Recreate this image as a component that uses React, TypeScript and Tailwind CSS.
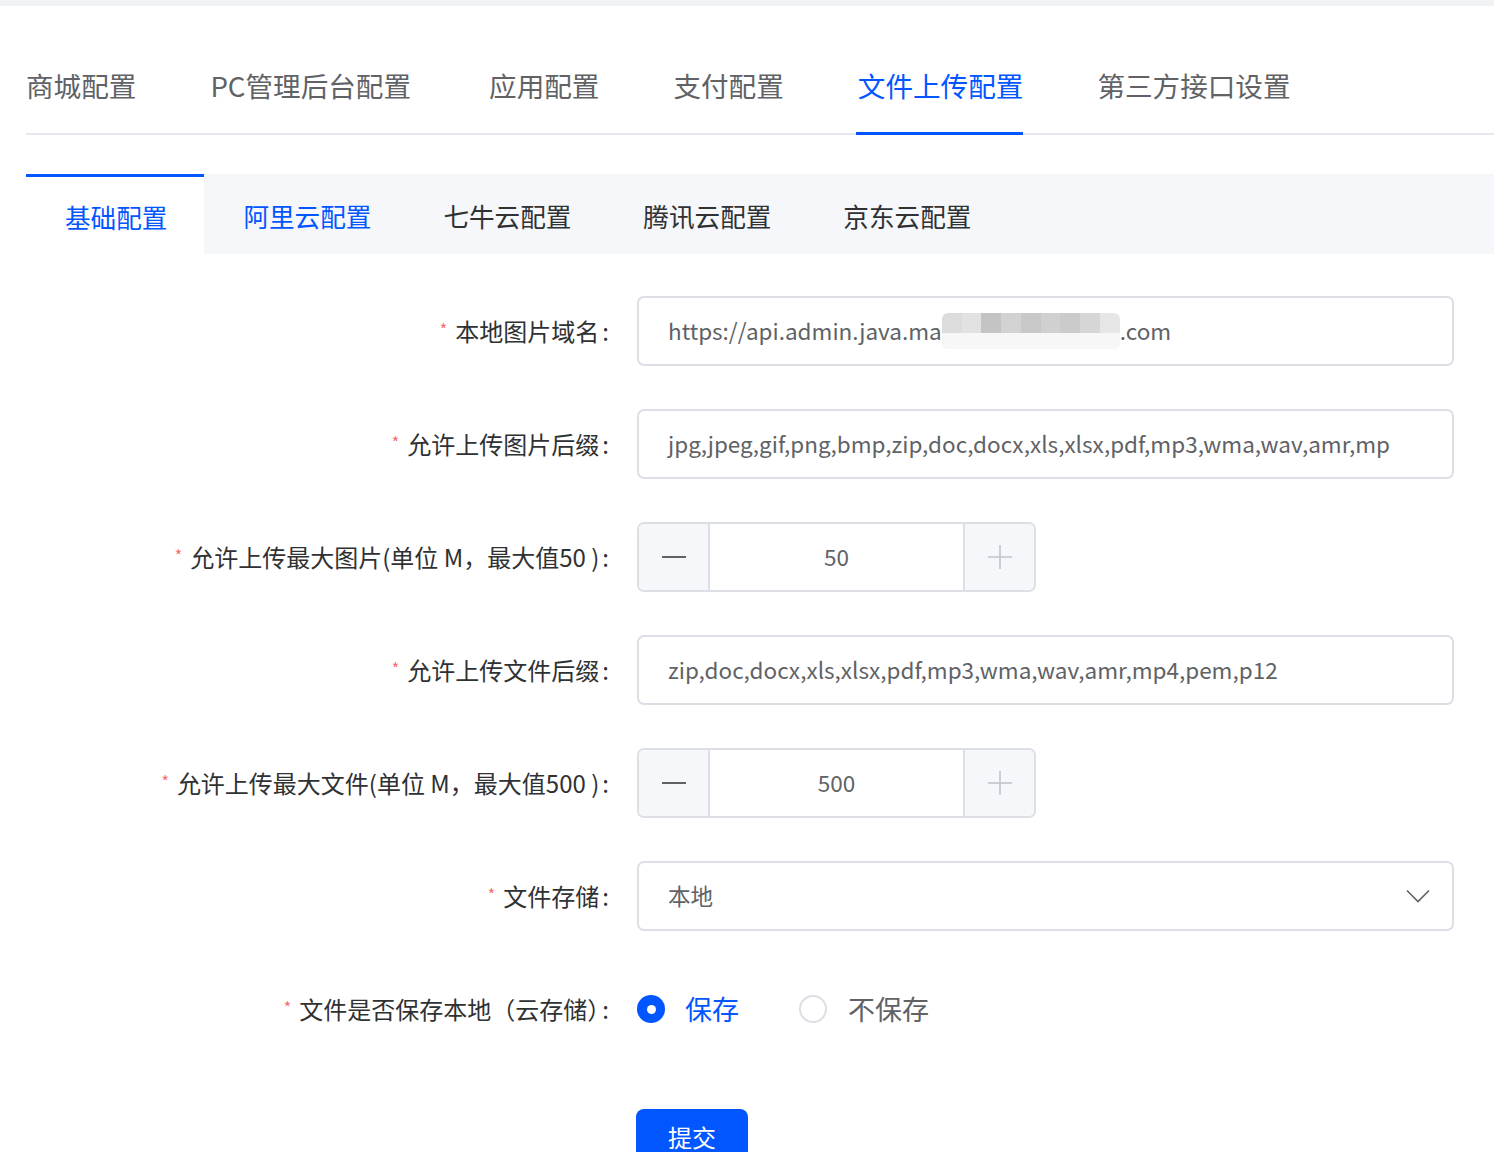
import React from 'react';

const topTabs = ['商城配置', 'PC管理后台配置', '应用配置', '支付配置', '文件上传配置', '第三方接口设置'];
const subTabs = ['基础配置', '阿里云配置', '七牛云配置', '腾讯云配置', '京东云配置'];

const font = { fontFamily: '"Noto Sans CJK SC", "Noto Sans", sans-serif' };

const Label = ({ children }: { children: React.ReactNode }) => (
  <div className="w-[585px] shrink-0 text-right text-[24px] text-[#303133] pr-[2px] whitespace-nowrap">
    <span className="text-[#f56c6c] text-[16px] mr-[8px] relative top-[-5px]">*</span>
    {children}
    <span className="ml-[3px]">:</span>
  </div>
);

const Row = ({ label, children }: { label: React.ReactNode; children: React.ReactNode }) => (
  <div className="flex items-center h-[70px] mb-[43px]">
    <Label>{label}</Label>
    <div className="ml-[26px]">{children}</div>
  </div>
);

const TextInput = ({ children }: { children: React.ReactNode }) => (
  <div className="w-[817px] h-[70px] border-2 border-[#dcdfe6] rounded-[7px] flex items-center pl-[29px] text-[22.5px] text-[#606266]">
    {children}
  </div>
);

const Stepper = ({ value }: { value: string }) => (
  <div className="w-[399px] h-[70px] border-2 border-[#dcdfe6] rounded-[7px] flex overflow-hidden">
    <div className="w-[71px] bg-[#f5f7fa] border-r-2 border-[#dcdfe6] flex items-center justify-center">
      <svg width="24" height="4" viewBox="0 0 24 4"><line x1="0" y1="2" x2="24" y2="2" stroke="#606266" strokeWidth="2" /></svg>
    </div>
    <div className="flex-1 flex items-center justify-center text-[22.5px] text-[#606266]">{value}</div>
    <div className="w-[71px] bg-[#f5f7fa] border-l-2 border-[#dcdfe6] flex items-center justify-center">
      <svg width="24" height="24" viewBox="0 0 24 24">
        <line x1="0" y1="12" x2="24" y2="12" stroke="#c0c4cc" strokeWidth="1.6" />
        <line x1="12" y1="0" x2="12" y2="24" stroke="#c0c4cc" strokeWidth="1.6" />
      </svg>
    </div>
  </div>
);

// mosaic used to hide part of the domain
const mosaic = ['#dcdcdc', '#e2e2e2', '#c4c4c4', '#d2d2d2', '#c8c8c8', '#d0d0d0', '#cbcbcb', '#d6d6d6', '#e6e6e6'];

export default function App() {
  return (
    <div className="min-h-screen bg-white" style={font}>
      <div className="h-[6px] bg-[#f0f2f5]" />
      <div className="pl-[26px]">
        <div className="flex gap-[74px] h-[129px] border-b-2 border-[#e4e7ed]">
          {topTabs.map((t, i) => (
            <div key={t} className={`relative pt-[59px] ${i === 1 ? 'pr-[4px]' : ''}`}>
              <span className={`text-[27.6px] leading-[40px] whitespace-nowrap ${i === 4 ? 'text-[#0256ff]' : 'text-[#606266]'}`}>{t}</span>
              {i === 4 && <div className="absolute left-[-2px] right-0 bottom-[-2px] h-[3px] bg-[#0256ff]" />}
            </div>
          ))}
        </div>

        <div className="mt-[39px] h-[80px] bg-[#f5f7fa] flex">
          {subTabs.map((t, i) => (
            <div
              key={t}
              className={`flex items-center pt-[4px] text-[25.6px] whitespace-nowrap ${
                i === 0
                  ? 'bg-white border-t-[3px] border-[#0256ff] text-[#0256ff] pl-[39px] pr-[37px]'
                  : i === 1
                  ? 'text-[#0256ff] pl-[39px] pr-[36px]'
                  : 'text-[#303133] px-[36px]'
              }`}
            >
              {t}
            </div>
          ))}
        </div>

        <div className="mt-[42px] pr-[41px]">
          <Row label="本地图片域名">
            <TextInput>
              <span>https://api.admin.java.ma</span>
              <span className="inline-flex flex-col w-[178px] h-[36px] rounded-[6px] overflow-hidden">
                <span className="flex h-[20px]">
                  {mosaic.map((c, i) => (
                    <span key={i} className="flex-1" style={{ background: c }} />
                  ))}
                </span>
                <span className="flex-1 bg-[#f7f7f7]" />
              </span>
              <span>.com</span>
            </TextInput>
          </Row>
          <Row label="允许上传图片后缀">
            <TextInput>jpg,jpeg,gif,png,bmp,zip,doc,docx,xls,xlsx,pdf,mp3,wma,wav,amr,mp</TextInput>
          </Row>
          <Row label="允许上传最大图片(单位 M，最大值50 )">
            <Stepper value="50" />
          </Row>
          <Row label="允许上传文件后缀">
            <TextInput>zip,doc,docx,xls,xlsx,pdf,mp3,wma,wav,amr,mp4,pem,p12</TextInput>
          </Row>
          <Row label="允许上传最大文件(单位 M，最大值500 )">
            <Stepper value="500" />
          </Row>
          <Row label="文件存储">
            <div className="w-[817px] h-[70px] border-2 border-[#dcdfe6] rounded-[7px] flex items-center justify-between pl-[29px] pr-[22px] text-[22.5px] text-[#606266]">
              <span>本地</span>
              <svg width="24" height="14" viewBox="0 0 24 14" fill="none">
                <path d="M1 1.5 L12 12.5 L23 1.5" stroke="#606266" strokeWidth="1.6" />
              </svg>
            </div>
          </Row>
          <Row
            label={
              <>
                文件是否保存本地（云存储<span className="[font-feature-settings:'halt']">）</span>
              </>
            }
          >
            <div className="flex items-center">
              <span className="w-[28px] h-[28px] rounded-full bg-[#0256ff] flex items-center justify-center">
                <span className="w-[9px] h-[9px] rounded-full bg-white" />
              </span>
              <span className="ml-[20px] text-[27px] text-[#0256ff]">保存</span>
              <span className="ml-[60px] w-[28px] h-[28px] rounded-full border-2 border-[#dcdfe6]" />
              <span className="ml-[21px] text-[27px] text-[#606266]">不保存</span>
            </div>
          </Row>
          <div className="flex mt-[65px]">
            <div className="w-[610px] shrink-0" />
            <button className="w-[112px] h-[56px] rounded-[8px] bg-[#0256ff] text-white text-[24px]">提交</button>
          </div>
        </div>
      </div>
    </div>
  );
}
